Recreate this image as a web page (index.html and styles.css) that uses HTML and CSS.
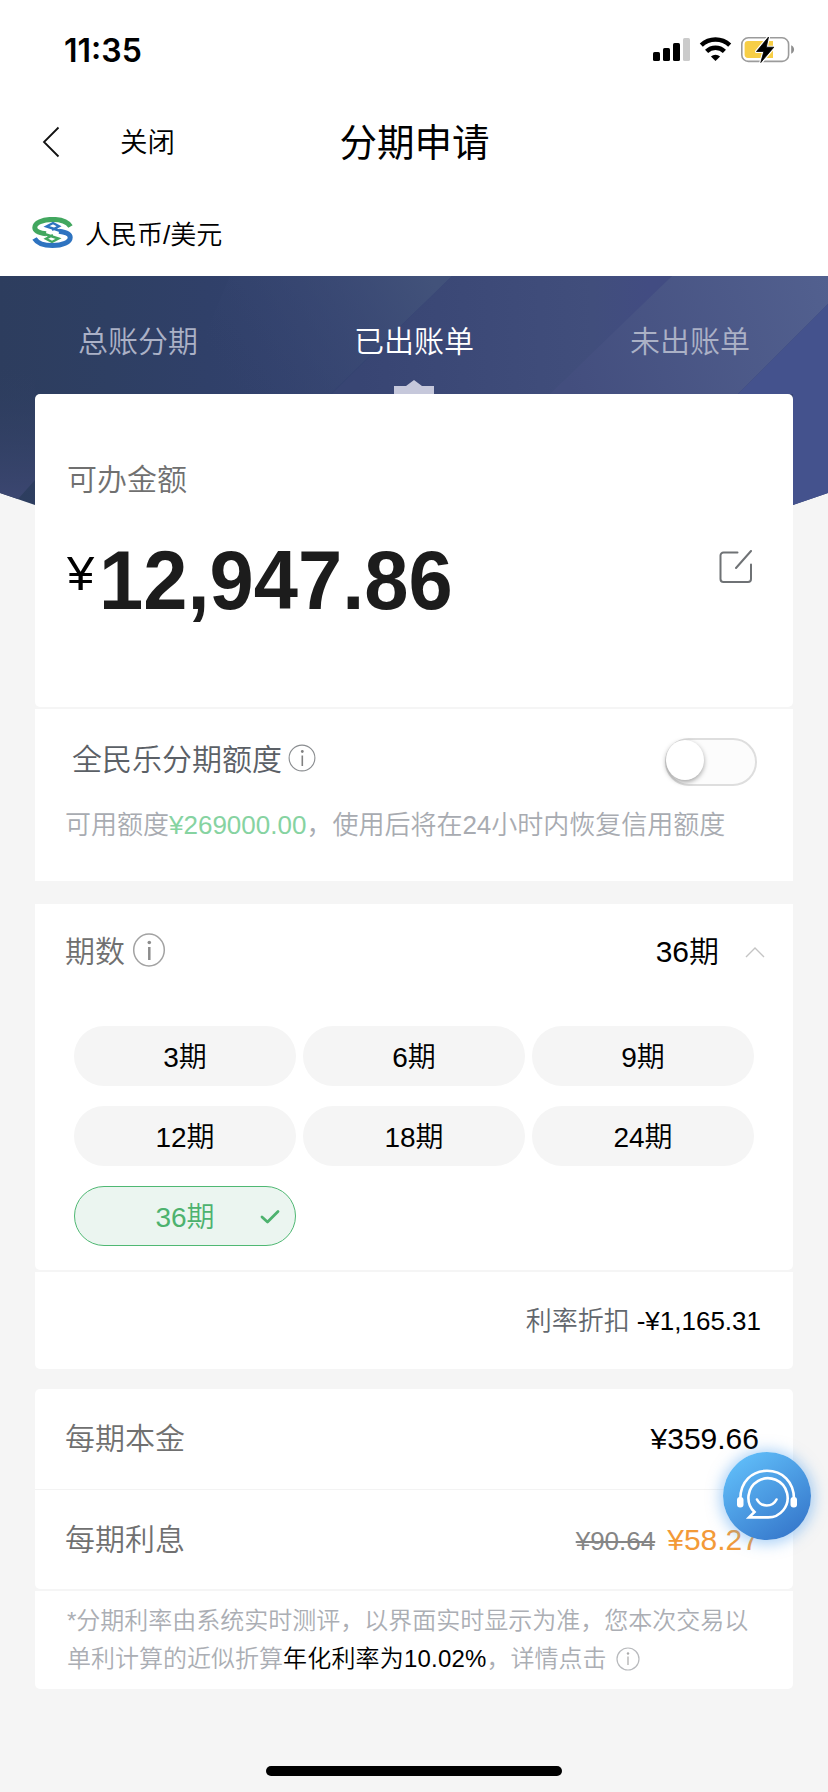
FILE: index.html
```html
<!DOCTYPE html>
<html lang="zh-CN">
<head>
<meta charset="utf-8">
<title>分期申请</title>
<link rel="stylesheet" href="styles.css">
</head>
<body>
<main class="screen">
  <header class="top">
    <div class="status">
      <span class="clock">11:35</span>
      <svg class="status-icons" width="144" height="30" viewBox="651 35 144 30">
        <rect x="653" y="52" width="7" height="9" rx="1.6"/>
        <rect x="663" y="48" width="7" height="13" rx="1.6"/>
        <rect x="673" y="43" width="7" height="18" rx="1.6"/>
        <rect x="683" y="38" width="7" height="23" rx="1.6" fill="#cbcbcb"/>
        <g fill="none" stroke="#000" stroke-width="4.4">
          <path d="M701.3 45.2a20.5 20.5 0 0 1 28.4 0"/>
          <path d="M706.6 51.4a12.6 12.6 0 0 1 17.8 0"/>
        </g>
        <path d="M715.5 61l-4.6-4.4a6.6 6.6 0 0 1 9.200 0z"/>
        <rect x="741.8" y="37.800" width="46.800" height="23.600" rx="6.500" fill="#fff" stroke="#9b9b9b" stroke-width="1.600"/>
        <path d="M748 41h25v17h-25a3.400 3.400 0 0 1-3.400-3.400v-10.200a3.400 3.400 0 0 1 3.400-3.400z" fill="#f7ce46"/>
        <path d="M791.200 45.300c3.800 1.300 3.800 7.200 0 8.500z" fill="#8e8e8e"/>
        <path d="M768.500 37l-12 14.500h7.300l-3 11 13-15.300h-7.500z" stroke="#fff" stroke-width="3" stroke-linejoin="round"/>
        <path d="M768.500 37l-12 14.500h7.300l-3 11 13-15.300h-7.500z" stroke="#000" stroke-width=".8" stroke-linejoin="round"/>
      </svg>
    </div>
    <nav class="navbar">
      <div class="nav-left">
        <svg class="back" width="18" height="32" viewBox="0 0 18 32"><path d="M16.500 1.500L2 16l14.500 14.500" fill="none" stroke="#111" stroke-width="1.800"/></svg>
        <span class="close">关闭</span>
      </div>
      <h1 class="title">分期申请</h1>
    </nav>
    <div class="currency">
      <svg class="logo" width="42" height="32" viewBox="0 0 42 32" fill="none">
        <g stroke="#42a75f">
          <path d="M38.500 9.500C35.500 4.500 28.500 2.400 20.500 2.400 10.500 2.400 2.800 5.800 2.800 10.500c0 3.800 5 5.500 11.200 6.300" stroke-width="5"/>
          <path d="M11 16.500l15.500 5L20 25l-6-3.300 7-3.700" stroke-width="2.400"/>
        </g>
        <g stroke="#2e73c0">
          <path d="M2.500 21.500C5.500 26.500 12.500 28.600 20.500 28.600c10 0 17.700-3.400 17.700-8.100 0-3.800-5-5.500-11.200-6.300" stroke-width="5"/>
          <path d="M30 14.500l-15.500-5L21 6l6 3.300-7 3.700" stroke-width="2.400"/>
        </g>
      </svg>
      <span>人民币/美元</span>
    </div>
  </header>

  <section class="hero">
    <svg class="hero-bg" width="828" height="230" viewBox="0 0 828 230" preserveAspectRatio="none">
      <defs>
        <linearGradient id="base" x1="0" y1="0" x2="1" y2="0"><stop offset="0" stop-color="#2d3d5e"/><stop offset=".13" stop-color="#2e3f63"/><stop offset=".25" stop-color="#304069"/><stop offset=".52" stop-color="#374575"/></linearGradient>
        <linearGradient id="peak" x1="230" y1="110" x2="430" y2="0" gradientUnits="userSpaceOnUse"><stop offset="0" stop-color="#35446f" stop-opacity="0"/><stop offset="1" stop-color="#42527a"/></linearGradient>
        <linearGradient id="mid" x1="360" y1="0" x2="650" y2="0" gradientUnits="userSpaceOnUse"><stop offset="0" stop-color="#384573"/><stop offset=".8" stop-color="#414e7c"/><stop offset="1" stop-color="#424c82"/></linearGradient>
        <linearGradient id="light" x1="560" y1="80" x2="828" y2="0" gradientUnits="userSpaceOnUse"><stop offset="0" stop-color="#434e7e"/><stop offset="1" stop-color="#52608f"/></linearGradient>
        <linearGradient id="edge" x1="0" y1="80" x2="0" y2="220" gradientUnits="userSpaceOnUse"><stop offset="0" stop-color="#2d3d5e" stop-opacity="0"/><stop offset="1" stop-color="#3b4670"/></linearGradient>
      </defs>
      <path d="M0 0h828v217l-35 12H35L0 217z" fill="url(#base)"/>
      <path d="M230 0h222L330 118H180z" fill="url(#peak)"/>
      <path d="M452 0h220L560 118H332z" fill="url(#mid)"/>
      <path d="M672 0h156v28L738 118H550z" fill="url(#light)"/>
      <path d="M828 28v189l-35 12V118h-55z" fill="#44528d"/>
      <path d="M0 80h35v124l-17 19L0 217z" fill="url(#edge)"/>
    </svg>
    <div class="tabs">
      <span class="tab">总账分期</span>
      <span class="tab active">已出账单</span>
      <span class="tab">未出账单</span>
    </div>
    <svg class="notch" width="40" height="15" viewBox="0 0 40 15"><path d="M0 7h12L20 1l8 6h12v8H0z" fill="#c6c8db"/></svg>
  </section>

  <div class="content">
    <section class="card amount-card">
      <div class="label amount-label">可办金额</div>
      <div class="amount-row">
        <div class="amount"><span class="yen">¥</span><span class="sum">12,947.86</span></div>
        <svg class="edit" width="34" height="34" viewBox="0 0 34 34" fill="none" stroke="#6f7275" stroke-width="2" stroke-linecap="round"><path d="M18.500 2.500H4.500a3 3 0 0 0-3 3v23.500a3 3 0 0 0 3 3h24.500a3 3 0 0 0 3-3V14.500M17 18L32 1"/></svg>
      </div>
    </section>

    <section class="card quota-card">
      <div class="quota-head">
        <span class="quota-name">全民乐分期额度</span>
        <svg class="info" width="28" height="28" viewBox="0 0 28 28"><circle cx="14" cy="14" r="12.900" fill="none" stroke="#8a8d90" stroke-width="1.100"/><circle cx="14.300" cy="7.500" r="1.400" fill="#808080"/><path d="M14.300 11.500v10.500" stroke="#808080" stroke-width="1.600"/></svg>
        <span class="switch"><i class="knob"></i></span>
      </div>
      <p class="quota-desc">可用额度<b class="green">¥269000.00</b>，使用后将在24小时内恢复信用额度</p>
    </section>

    <section class="card term-card">
      <div class="term-head">
        <span class="label">期数</span>
        <svg class="term-info" width="34" height="34" viewBox="0 0 34 34"><ellipse cx="17" cy="17" rx="15.300" ry="15.900" fill="none" stroke="#a2a2a2" stroke-width="1.500"/><circle cx="17.300" cy="9.500" r="1.800" fill="#8c8c8c"/><path d="M17.300 14v13" stroke="#8c8c8c" stroke-width="2.500"/></svg>
        <span class="term-value">36期</span>
        <svg class="chevron" width="20" height="12" viewBox="0 0 20 12"><path d="M1 11l9-9 9 9" fill="none" stroke="#c4c4c4" stroke-width="1.400"/></svg>
      </div>
      <div class="terms">
        <span class="pill">3期</span><span class="pill">6期</span><span class="pill">9期</span>
        <span class="pill">12期</span><span class="pill">18期</span><span class="pill">24期</span>
        <span class="pill selected">36期<svg class="tick" width="20" height="16" viewBox="0 0 20 16"><path d="M2 8l5.500 5L18 2.500" fill="none" stroke="#4db26e" stroke-width="2.800" stroke-linecap="round" stroke-linejoin="round"/></svg></span>
      </div>
    </section>

    <section class="card discount-card">
      <span class="discount-label">利率折扣</span>
      <span class="discount-value">-¥1,165.31</span>
    </section>

    <section class="card pay-card">
      <div class="row"><span class="label">每期本金</span><span class="value">¥359.66</span></div>
      <div class="row"><span class="label">每期利息</span><span class="value"><s class="old">¥90.64</s><span class="orange">¥58.27</span></span></div>
    </section>

    <section class="card note-card">
      <p class="note">*分期利率由系统实时测评，以界面实时显示为准，您本次交易以</p>
      <p class="note">单利计算的近似折算<span class="strong">年化利率为10.02%</span>，详情点击<svg class="note-info" width="24" height="24" viewBox="0 0 24 24"><circle cx="12" cy="12" r="11" fill="none" stroke="#b8babd" stroke-width="1.200"/><circle cx="12" cy="6.500" r="1.200" fill="#aaa"/><path d="M12 9.500v8.500" stroke="#b0b0b0" stroke-width="1.300"/></svg></p>
    </section>
  </div>

  <div class="service">
    <svg width="88" height="88" viewBox="0 0 88 88" fill="none" stroke="#fff" stroke-width="2.600">
      <path d="M17.300 47C17.300 29.500 29 18.800 44 18.800S71 29.500 71 47"/>
      <path d="M31.500 60A19.600 19.600 0 1 1 44.200 65.400H26z"/>
      <path d="M34 47.500c4 8 15.500 8 19.500 0" stroke-linecap="round"/>
      <rect x="14" y="45" width="6.500" height="10.500" rx="3" fill="#fff" stroke="none"/>
      <rect x="67.500" y="45" width="6.500" height="10.500" rx="3" fill="#fff" stroke="none"/>
    </svg>
  </div>
  <div class="home-bar"></div>
</main>
</body>
</html>
```
FILE: styles.css
```css
* { box-sizing: border-box; }
body {
  margin: 0;
  background: #f5f5f5;
  color: #000;
  font-family: "Liberation Sans", "Noto Sans CJK SC", sans-serif;
  font-weight: 350;
}
p, h1 { margin: 0; }
svg { display: block; flex: none; }
.screen {
  position: relative;
  width: 828px;
  height: 1792px;
  overflow: hidden;
  background: #f5f5f5;
}
.top { height: 276px; background: #fff; }
.status {
  display: flex;
  justify-content: space-between;
  align-items: center;
  height: 100px;
  padding: 0 33px 0 64px;
}
.clock { font: 600 32px/40px Inter, sans-serif; padding-top: 1px; }
.navbar {
  display: grid;
  grid-template-columns: 1fr auto 1fr;
  align-items: center;
  height: 86px;
}
.nav-left { display: flex; align-items: center; padding-left: 42px; }
.back { margin-top: -2px; }
.close { margin-left: 60px; font-size: 27.500px; line-height: 40px; }
.title { font-size: 37.500px; line-height: 50px; font-weight: 400; padding-left: 1px; }
.currency {
  display: flex;
  align-items: center;
  gap: 11px;
  height: 90px;
  padding: 7px 0 0 32px;
  font-size: 26px;
}
.currency .logo { margin-top: -4px; }
.currency span { line-height: 40px; }
.hero { position: relative; height: 118px; }
.hero-bg { position: absolute; top: 0; left: 0; }
.tabs {
  position: relative;
  display: grid;
  grid-template-columns: repeat(3, 1fr);
  text-align: center;
  font-size: 30px;
  line-height: 132px;
  color: #abb1c6;
}
.tab.active { color: #fff; }
.notch { position: absolute; left: 394px; bottom: 0; }
.content { position: relative; padding: 0 35px; }
.card { background: #fff; }
.label { font-size: 30px; line-height: 44px; color: #707070; }
.amount-card { height: 313px; border-radius: 5px; padding: 64px 40px 0 32px; }
.amount-row { display: flex; justify-content: space-between; align-items: flex-start; padding-top: 34px; }
.amount { display: flex; align-items: flex-start; }
.yen { width: 32px; font-size: 49px; line-height: 80px; margin-top: -3px; }
.sum {
  font-size: 79.500px;
  line-height: 90px;
  font-weight: 700;
  color: #1c1c1c;
  transform: scaleY(1.05);
}
.edit { margin-top: 14px; }
.quota-card { height: 172px; margin-top: 2px; padding: 29px 36px 0 37px; }
.quota-head { display: flex; align-items: flex-start; height: 63px; }
.quota-name { font-size: 30px; line-height: 44px; color: #5b6066; }
.info { margin: 6px 0 0 6px; }
.switch {
  width: 92px;
  height: 48px;
  margin-left: auto;
  border: 2px solid #dedede;
  border-radius: 25px;
  background: #fcfcfc;
}
.knob {
  display: block;
  width: 38px;
  height: 40px;
  margin-left: -1px;
  border-radius: 50%;
  background: #fff;
  box-shadow: 0 2px 5px rgba(0, 0, 0, .36);
}
.quota-desc { margin-left: -7px; font-size: 26px; line-height: 48px; color: #a8abb1; white-space: nowrap; }
.green { font-weight: 350; color: #86d3a1; }
.term-card { height: 366px; margin-top: 23px; border-radius: 0 0 5px 5px; padding: 25px 28px 0 30px; }
.term-head { display: flex; align-items: center; height: 46px; }
.term-info { margin: -4px 0 0 7px; }
.term-value { margin-left: auto; font-size: 30px; line-height: 44px; }
.chevron { margin: -1px 0 0 26px; }
.terms {
  display: grid;
  grid-template-columns: repeat(3, 222px);
  gap: 20px 7px;
  margin: 51px 0 0 9px;
}
.pill {
  position: relative;
  height: 60px;
  border-radius: 30px;
  background: #f5f5f5;
  text-align: center;
  font-size: 28px;
  line-height: 64px;
}
.pill.selected { border: 1px solid #4fb873; background: #ebf5f0; color: #4db26e; line-height: 62px; }
.tick { position: absolute; top: 22px; right: 15px; }
.discount-card {
  display: flex;
  justify-content: flex-end;
  align-items: baseline;
  gap: 7px;
  height: 97px;
  margin-top: 2px;
  padding-right: 32px;
  border-radius: 0 0 5px 5px;
  font-size: 26px;
  line-height: 98px;
}
.discount-label { color: #62676d; }
.pay-card { height: 200px; margin-top: 20px; border-radius: 5px; }
.row { display: flex; justify-content: space-between; align-items: center; height: 100px; padding: 0 34px 0 30px; }
.row + .row { border-top: 1px solid #f3f3f3; }
.value { display: flex; align-items: baseline; gap: 12px; font-size: 30px; }
.old { font-size: 26px; color: #858585; }
.orange { color: #f39a38; }
.note-card { height: 98px; margin-top: 2px; border-radius: 0 0 5px 5px; padding: 11px 0 0 32px; }
.note { display: flex; align-items: center; height: 38px; font-size: 24px; line-height: 38px; color: #abaeb4; white-space: nowrap; }
.strong { color: #000; letter-spacing: .200px; }
.note-info { margin-left: 9px; }
.service {
  position: absolute;
  left: 723px;
  top: 1452px;
  width: 88px;
  height: 88px;
  border-radius: 50%;
  background: linear-gradient(145deg, #61bffa 8%, #3576ca 92%);
  box-shadow: 0 1px 14px 3px rgba(90, 165, 240, .5);
}
.home-bar {
  position: absolute;
  left: 266px;
  bottom: 16px;
  width: 296px;
  height: 10px;
  border-radius: 5px;
  background: #000;
}
```
